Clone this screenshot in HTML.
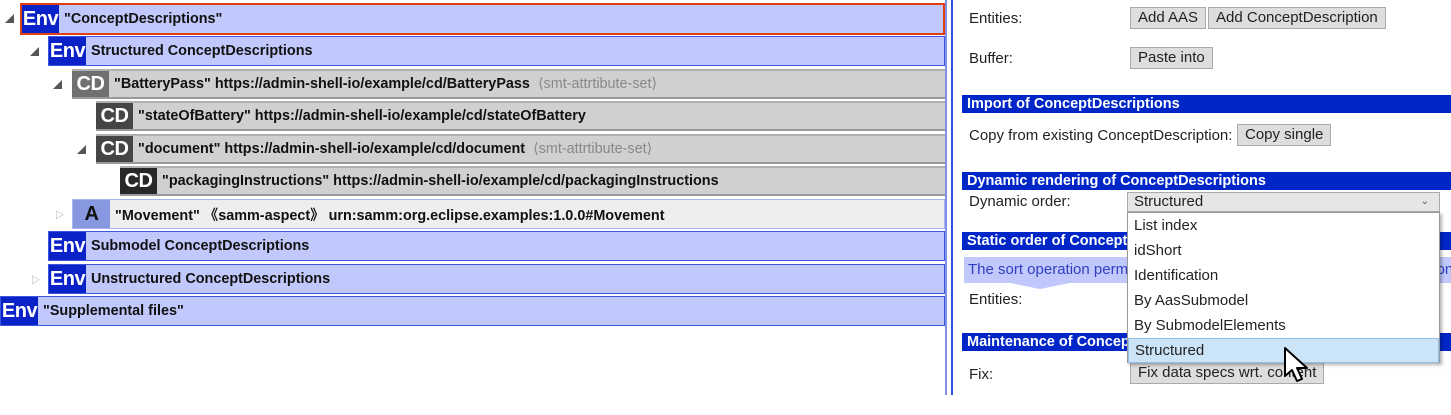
<!DOCTYPE html>
<html><head><meta charset="utf-8"><style>
*{margin:0;padding:0;box-sizing:border-box}
body{width:1451px;height:415px;background:#fff;position:relative;overflow:hidden;font-family:"Liberation Sans","Noto Sans CJK SC",sans-serif;}
.row{position:absolute;height:30px;right:506px;display:flex;align-items:center;font-weight:bold;font-size:14.4px;color:#111;white-space:nowrap;overflow:hidden}
.env{background:#c0c8fc;border:1px solid #3a55e0}
.cd{background:#d0d0d0;border-top:2px solid #b0b0b0;border-bottom:2px solid #9a9a9a}
.b{height:100%;display:flex;align-items:center;justify-content:center;color:#fff;font-size:20px;font-weight:bold;margin-right:5px;flex:none;letter-spacing:-0.5px}
.be{background:#0a22c8;width:37px}
.g{color:#888;font-weight:normal;margin-left:8px}
.tri{position:absolute;font-size:9px;color:#555}
.hd{position:absolute;left:962px;width:489px;height:18px;background:#0026c8;color:#fff;font-weight:bold;font-size:14.5px;padding-left:5px;line-height:18px;white-space:nowrap}
.lb{position:absolute;font-size:15px;color:#222;white-space:nowrap}
.btn{position:absolute;height:22px;background:#ddd;border:1px solid #aaa;font-size:15px;color:#222;line-height:20px;padding:0 7px;white-space:nowrap}
.dd{position:absolute;left:1127px;top:212px;width:313px;height:151px;background:#fff;border:1px solid #999;box-shadow:2px 2px 3px rgba(0,0,0,.3);font-size:15px;color:#222}
.dd div{height:25px;line-height:25px;padding-left:6px}
</style></head><body>
<div class="row env" style="left:20px;top:3px;height:32px;border:2px solid #e04010"><div class="b be">Env</div>"ConceptDescriptions"</div>
<div class="tri" style="left:5px;top:12px">◢</div>
<div class="row env" style="left:48px;top:36px"><div class="b be">Env</div>Structured ConceptDescriptions</div>
<div class="tri" style="left:30px;top:45px">◢</div>
<div class="row cd" style="left:72px;top:69px"><div class="b" style="background:#707070;width:37px">CD</div>"BatteryPass" https://admin-shell-io/example/cd/BatteryPass<span class="g">⟨smt-attrtibute-set⟩</span></div>
<div class="tri" style="left:53px;top:78px">◢</div>
<div class="row cd" style="left:96px;top:101px"><div class="b" style="background:#454545;width:37px">CD</div>"stateOfBattery" https://admin-shell-io/example/cd/stateOfBattery</div>
<div class="row cd" style="left:96px;top:134px"><div class="b" style="background:#454545;width:37px">CD</div>"document" https://admin-shell-io/example/cd/document<span class="g">⟨smt-attrtibute-set⟩</span></div>
<div class="tri" style="left:77px;top:143px">◢</div>
<div class="row cd" style="left:120px;top:166px"><div class="b" style="background:#282828;width:37px">CD</div>"packagingInstructions" https://admin-shell-io/example/cd/packagingInstructions</div>
<div class="row" style="left:72px;top:199px;background:#eeeeee;border:1px solid #a8b4f0"><div class="b" style="background:#8898e0;color:#111;width:37px">A</div>"Movement" 《samm-aspect》 urn:samm:org.eclipse.examples:1.0.0#Movement</div>
<div class="tri" style="left:55px;top:208px;color:#999">▷</div>
<div class="row env" style="left:48px;top:231px"><div class="b be">Env</div>Submodel ConceptDescriptions</div>
<div class="row env" style="left:48px;top:264px"><div class="b be">Env</div>Unstructured ConceptDescriptions</div>
<div class="tri" style="left:31px;top:273px;color:#999">▷</div>
<div class="row env" style="left:0;top:296px"><div class="b be">Env</div>"Supplemental files"</div>
<div style="position:absolute;left:945px;top:0;width:2px;height:395px;background:#8090e8"></div>
<div style="position:absolute;left:951px;top:0;width:2px;height:395px;background:#3050e0"></div>
<div class="lb" style="left:969px;top:10px">Entities:</div>
<div class="btn" style="left:1130px;top:7px">Add AAS</div>
<div class="btn" style="left:1208px;top:7px">Add ConceptDescription</div>
<div class="lb" style="left:969px;top:50px">Buffer:</div>
<div class="btn" style="left:1130px;top:47px">Paste into</div>
<div class="hd" style="top:95px">Import of ConceptDescriptions</div>
<div class="lb" style="left:969px;top:127px">Copy from existing ConceptDescription:</div>
<div class="btn" style="left:1237px;top:124px">Copy single</div>
<div class="hd" style="top:172px">Dynamic rendering of ConceptDescriptions</div>
<div class="lb" style="left:969px;top:193px">Dynamic order:</div>
<div style="position:absolute;left:1127px;top:192px;width:313px;height:20px;background:#e6e6e6;border:1px solid #aaa;font-size:15px;line-height:18px;padding-left:6px;color:#222">Structured<span style="position:absolute;right:10px;font-size:10px;color:#555">⌄</span></div>
<div class="hd" style="top:232px">Static order of ConceptDescriptions</div>
<div style="position:absolute;left:964px;top:257px;width:487px;height:26px;background:#c0c8fc;color:#3040c0;font-size:15px;line-height:26px;padding-left:4px;white-space:nowrap;overflow:hidden">The sort operation permanently changes the order of ConceptDescriptions in the environment</div>
<div style="position:absolute;left:1010px;top:283px;width:0;height:0;border-left:30px solid transparent;border-right:30px solid transparent;border-top:6px solid #c0c8fc"></div>
<div class="lb" style="left:969px;top:291px">Entities:</div>
<div class="hd" style="top:333px">Maintenance of ConceptDescriptions</div>
<div class="lb" style="left:969px;top:366px">Fix:</div>
<div class="btn" style="left:1130px;top:362px">Fix data specs wrt. content</div>
<div class="dd">
<div>List index</div><div>idShort</div><div>Identification</div><div>By AasSubmodel</div><div>By SubmodelElements</div>
<div style="background:#cce4f7;border:1px solid #90c0ea;height:25px;line-height:23px">Structured</div>
</div>
<svg style="position:absolute;left:1283px;top:346px" width="30" height="40" viewBox="0 0 30 40"><path d="M2 2 L2 30 L9 24 L14 35 L19 33 L14 22 L24 22 Z" fill="#fff" stroke="#000" stroke-width="2" stroke-linejoin="round"/></svg>
</body></html>
